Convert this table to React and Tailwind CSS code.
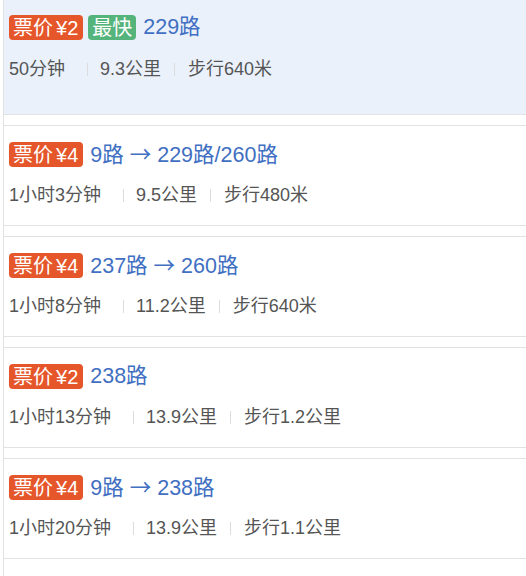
const routes = [
  { price: 2, fastest: true, lines: ['229路'], time: '50分钟', dist: '9.3公里', walk: '步行640米', active: true },
  { price: 4, lines: ['9路', '229路/260路'], time: '1小时3分钟', dist: '9.5公里', walk: '步行480米' },
  { price: 4, lines: ['237路', '260路'], time: '1小时8分钟', dist: '11.2公里', walk: '步行640米' },
  { price: 2, lines: ['238路'], time: '1小时13分钟', dist: '13.9公里', walk: '步行1.2公里' },
  { price: 4, lines: ['9路', '238路'], time: '1小时20分钟', dist: '13.9公里', walk: '步行1.1公里' },
]

const Sep = () => <span className="inline-block w-px h-[13px] bg-[#dcdcdc]" />

const RouteCard = ({ route }) => (
  <div
    className={
      route.active
        ? 'bg-[#eaf1fb] border-b border-[#e2e2e2] pl-[5px] pt-[15px] pb-[33px]'
        : 'bg-white border-y border-[#e2e2e2] pl-[5px] pt-[16px] pb-[18px] mt-[10px]'
    }
  >
    <div className="flex items-center h-[25px]">
      <span className="h-[25px] flex items-center rounded-[4px] bg-[#e5572a] text-white text-[20px] leading-none pl-[4px] pr-[5px]">
        票价<span className="ml-[3px]">¥{route.price}</span>
      </span>
      {route.fastest && (
        <span className="ml-[5px] h-[25px] flex items-center rounded-[4px] bg-[#55b47b] text-white text-[20px] leading-none px-[4px]">
          最快
        </span>
      )}
      <span className="ml-[7px] text-[21.5px] leading-none text-[#416fc2] whitespace-pre">
        {route.lines.map((l, i) => (
          <span key={i}>
            {i > 0 && (
              <>
                {' '}
                <span className="font-['Noto_Sans_CJK_SC',sans-serif]">→</span>
                {' '}
              </>
            )}
            {l}
          </span>
        ))}
      </span>
    </div>
    <div
      className={
        route.active
          ? 'mt-[17px] flex items-center text-[18px] leading-[24px] text-[#555]'
          : 'mt-[16px] flex items-center text-[18px] leading-[24px] text-[#555]'
      }
    >
      <span className="pr-[22px]">{route.time}</span>
      <Sep />
      <span className="pl-[12px] pr-[13px]">{route.dist}</span>
      <Sep />
      <span className="pl-[13px]">{route.walk}</span>
    </div>
  </div>
)

export default function App() {
  return (
    <div className="w-[526px] h-[576px] overflow-hidden bg-white font-['Liberation_Sans','Noto_Sans_CJK_SC',sans-serif]">
      <div className="ml-[3px] h-full border-l border-[#e2e2e2]">
        {routes.map((r, i) => (
          <RouteCard key={i} route={r} />
        ))}
      </div>
    </div>
  )
}
